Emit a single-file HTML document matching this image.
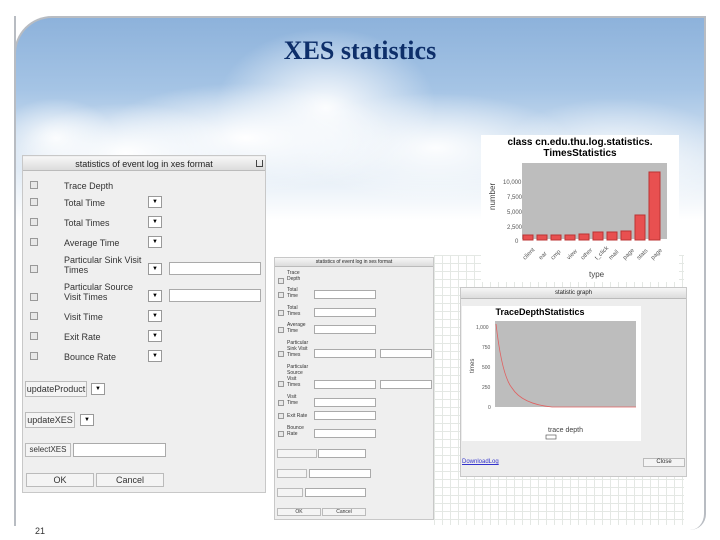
<!DOCTYPE html>
<html><head><meta charset="utf-8"><style>
*{margin:0;padding:0;box-sizing:border-box}
body{width:720px;height:540px;overflow:hidden;background:#fff;position:relative;font-family:"Liberation Sans",sans-serif}
.a{position:absolute}
.sky{left:14px;top:16px;width:692px;height:240px;border-top-left-radius:38px;border-top:2px solid #b8bcc2;border-left:2px solid #b8bcc2;
background:
radial-gradient(ellipse 110px 50px at 110px 135px,rgba(255,255,255,1),rgba(255,255,255,0)),
radial-gradient(ellipse 150px 55px at 230px 120px,rgba(255,255,255,1),rgba(255,255,255,0)),
radial-gradient(ellipse 110px 80px at 310px 90px,rgba(255,255,255,.95),rgba(255,255,255,0)),
radial-gradient(ellipse 140px 55px at 420px 130px,rgba(255,255,255,.95),rgba(255,255,255,0)),
radial-gradient(ellipse 120px 60px at 600px 140px,rgba(255,255,255,.85),rgba(255,255,255,0)),
radial-gradient(ellipse 60px 40px at 40px 120px,rgba(255,255,255,.9),rgba(255,255,255,0)),
linear-gradient(#8db2db 0%,#a5c4e5 30%,#dce8f4 60%,#fff 85%)}
.frameR{left:704px;top:16px;width:2px;height:360px;background:#b8bcc2}
.frameB{left:14px;top:16px;width:2px;height:510px;background:#b8bcc2}
.h1{left:0;top:36px;width:720px;text-align:center;font-family:"Liberation Serif",serif;font-weight:bold;font-size:26px;color:#0e2f6a}
.dlg{background:#efefef;border:1px solid #c8c8c8}
.hdr{background:linear-gradient(#f6f6f6,#dcdcdc);border-bottom:1px solid #bbb;text-align:center;font-size:9px;color:#222}
.cb{width:8px;height:8px;border:1px solid #999;background:#e8e8e8}
.t{font-size:9px;color:#333;line-height:10px}
.dd{width:14px;height:12px;border:1px solid #999;background:#fff;font-size:6px;text-align:center;line-height:10px}
.in{background:#fff;border:1px solid #aaa}
.btn{background:#f4f4f4;border:1px solid #bbb;font-size:9px;text-align:center;color:#333}
.grid{background-color:#fff;background-image:linear-gradient(#e4e8e4 1px,transparent 1px),linear-gradient(90deg,#e4e8e4 1px,transparent 1px);background-size:8px 8px}
</style></head><body>
<div class="a sky"></div>
<div class="a frameB"></div>
<div class="a frameR"></div>
<div class="a" style="left:690px;top:370px;width:16px;height:160px;border-right:2px solid #b8bcc2;border-bottom-right-radius:40px"></div>
<div class="a h1">XES statistics</div>

<div class="a grid" style="left:434px;top:255px;width:250px;height:270px"></div>

<!-- left dialog -->
<div class="a dlg" style="left:22px;top:155px;width:244px;height:338px"></div>
<div class="a hdr" style="left:23px;top:157px;width:242px;height:14px;line-height:14px">statistics of event log in xes format</div>
<div class="a" style="left:256px;top:160px;width:7px;height:7px;border:1px solid #444;border-top:none"></div>
<div class="a cb" style="left:30px;top:181px"></div><div class="a t" style="left:64px;top:181px">Trace Depth</div>
<div class="a cb" style="left:30px;top:198px"></div><div class="a t" style="left:64px;top:198px">Total Time</div><div class="a dd" style="left:148px;top:196px">▼</div>
<div class="a cb" style="left:30px;top:218px"></div><div class="a t" style="left:64px;top:218px">Total Times</div><div class="a dd" style="left:148px;top:216px">▼</div>
<div class="a cb" style="left:30px;top:238px"></div><div class="a t" style="left:64px;top:238px">Average Time</div><div class="a dd" style="left:148px;top:236px">▼</div>
<div class="a cb" style="left:30px;top:265px"></div><div class="a t" style="left:64px;top:255px">Particular Sink Visit<br>Times</div><div class="a dd" style="left:148px;top:263px">▼</div><div class="a in" style="left:169px;top:262px;width:92px;height:13px"></div>
<div class="a cb" style="left:30px;top:293px"></div><div class="a t" style="left:64px;top:282px">Particular Source<br>Visit Times</div><div class="a dd" style="left:148px;top:290px">▼</div><div class="a in" style="left:169px;top:289px;width:92px;height:13px"></div>
<div class="a cb" style="left:30px;top:312px"></div><div class="a t" style="left:64px;top:312px">Visit Time</div><div class="a dd" style="left:148px;top:310px">▼</div>
<div class="a cb" style="left:30px;top:332px"></div><div class="a t" style="left:64px;top:332px">Exit Rate</div><div class="a dd" style="left:148px;top:330px">▼</div>
<div class="a cb" style="left:30px;top:352px"></div><div class="a t" style="left:64px;top:352px">Bounce Rate</div><div class="a dd" style="left:148px;top:350px">▼</div>
<div class="a btn" style="left:25px;top:381px;width:62px;height:16px;line-height:14px">updateProduct</div><div class="a dd" style="left:91px;top:383px">▼</div>
<div class="a btn" style="left:25px;top:412px;width:50px;height:16px;line-height:14px">updateXES</div><div class="a dd" style="left:80px;top:414px">▼</div>
<div class="a btn" style="left:25px;top:443px;width:46px;height:14px;line-height:12px;font-size:8px">selectXES</div><div class="a in" style="left:73px;top:443px;width:93px;height:14px"></div>
<div class="a btn" style="left:26px;top:473px;width:68px;height:14px;line-height:12px">OK</div>
<div class="a btn" style="left:96px;top:473px;width:68px;height:14px;line-height:12px">Cancel</div>
<div class="a t" style="left:35px;top:526px;font-size:9px">21</div>

<!-- chart 1 -->
<div class="a" style="left:481px;top:135px;width:198px;height:147px;background:#fff"></div>
<div class="a" style="left:481px;top:137px;width:198px;text-align:center;font-size:10px;font-weight:bold;line-height:11px">class cn.edu.thu.log.statistics.<br>TimesStatistics</div>
<div class="a" style="left:522px;top:163px;width:145px;height:76px;background:#bdbdbd"></div>
<svg class="a" style="left:481px;top:160px" width="198" height="122">
<g fill="#e85050" stroke="#b33">
<rect x="42" y="75" width="10" height="5"/><rect x="56" y="75" width="10" height="5"/><rect x="70" y="75" width="10" height="5"/><rect x="84" y="75" width="10" height="5"/><rect x="98" y="74" width="10" height="6"/><rect x="112" y="72" width="10" height="8"/><rect x="126" y="72" width="10" height="8"/><rect x="140" y="71" width="10" height="9"/><rect x="154" y="55" width="10" height="25"/><rect x="168" y="12" width="11" height="68"/>
</g>
<g font-size="6" fill="#555"><text x="22" y="24">10,000</text><text x="26" y="39">7,500</text><text x="26" y="54">5,000</text><text x="26" y="69">2,500</text><text x="34" y="83">0</text></g>
<text x="14" y="50" font-size="8" fill="#444" transform="rotate(-90 14 50)">number</text>
<text x="108" y="117" font-size="8" fill="#444">type</text>
<g font-size="6" fill="#555"><text x="44" y="100" transform="rotate(-45 44 100)">client</text><text x="60" y="100" transform="rotate(-45 60 100)">ear</text><text x="72" y="100" transform="rotate(-45 72 100)">cmp</text><text x="88" y="100" transform="rotate(-45 88 100)">view</text><text x="102" y="100" transform="rotate(-45 102 100)">other</text><text x="116" y="100" transform="rotate(-45 116 100)">t_click</text><text x="130" y="100" transform="rotate(-45 130 100)">mail</text><text x="144" y="100" transform="rotate(-45 144 100)">page</text><text x="158" y="100" transform="rotate(-45 158 100)">stats</text><text x="172" y="100" transform="rotate(-45 172 100)">page</text></g>
</svg>

<!-- dialog 2 -->
<div class="a dlg" style="left:274px;top:257px;width:160px;height:263px"></div>
<div class="a hdr" style="left:275px;top:258px;width:158px;height:9px;line-height:9px;font-size:5px">statistics of event log in xes format</div>
<div style="font-size:5px;color:#333;line-height:6px">
<div class="a" style="left:287px;top:270px">Trace<br>Depth</div>
<div class="a" style="left:287px;top:287px">Total<br>Time</div>
<div class="a" style="left:287px;top:305px">Total<br>Times</div>
<div class="a" style="left:287px;top:322px">Average<br>Time</div>
<div class="a" style="left:287px;top:340px">Particular<br>Sink Visit<br>Times</div>
<div class="a" style="left:287px;top:364px">Particular<br>Source<br>Visit<br>Times</div>
<div class="a" style="left:287px;top:394px">Visit<br>Time</div>
<div class="a" style="left:287px;top:413px">Exit Rate</div>
<div class="a" style="left:287px;top:425px">Bounce<br>Rate</div>
</div>
<div class="a cb" style="left:278px;top:278px;width:6px;height:6px"></div>
<div class="a cb" style="left:278px;top:292px;width:6px;height:6px"></div>
<div class="a cb" style="left:278px;top:310px;width:6px;height:6px"></div>
<div class="a cb" style="left:278px;top:327px;width:6px;height:6px"></div>
<div class="a cb" style="left:278px;top:351px;width:6px;height:6px"></div>
<div class="a cb" style="left:278px;top:381px;width:6px;height:6px"></div>
<div class="a cb" style="left:278px;top:400px;width:6px;height:6px"></div>
<div class="a cb" style="left:278px;top:413px;width:6px;height:6px"></div>
<div class="a cb" style="left:278px;top:431px;width:6px;height:6px"></div>
<div class="a in" style="left:314px;top:290px;width:62px;height:9px"></div>
<div class="a in" style="left:314px;top:308px;width:62px;height:9px"></div>
<div class="a in" style="left:314px;top:325px;width:62px;height:9px"></div>
<div class="a in" style="left:314px;top:349px;width:62px;height:9px"></div><div class="a in" style="left:380px;top:349px;width:52px;height:9px"></div>
<div class="a in" style="left:314px;top:380px;width:62px;height:9px"></div><div class="a in" style="left:380px;top:380px;width:52px;height:9px"></div>
<div class="a in" style="left:314px;top:398px;width:62px;height:9px"></div>
<div class="a in" style="left:314px;top:411px;width:62px;height:9px"></div>
<div class="a in" style="left:314px;top:429px;width:62px;height:9px"></div>
<div class="a btn" style="left:277px;top:449px;width:40px;height:9px"></div><div class="a in" style="left:318px;top:449px;width:48px;height:9px"></div>
<div class="a btn" style="left:277px;top:469px;width:30px;height:9px"></div><div class="a in" style="left:309px;top:469px;width:62px;height:9px"></div>
<div class="a btn" style="left:277px;top:488px;width:26px;height:9px"></div><div class="a in" style="left:305px;top:488px;width:61px;height:9px"></div>
<div class="a btn" style="left:277px;top:508px;width:44px;height:8px;font-size:5px;line-height:6px">OK</div>
<div class="a btn" style="left:322px;top:508px;width:44px;height:8px;font-size:5px;line-height:6px">Cancel</div>

<!-- graph dialog -->
<div class="a dlg" style="left:460px;top:287px;width:227px;height:190px;background:#ededed"></div>
<div class="a hdr" style="left:461px;top:288px;width:225px;height:11px;line-height:11px;font-size:6px">statistic graph</div>
<div class="a" style="left:462px;top:306px;width:179px;height:135px;background:#fff"></div>
<div class="a" style="left:462px;top:307px;width:180px;text-align:center;font-size:9px;font-weight:bold;margin-left:-12px">TraceDepthStatistics</div>
<div class="a" style="left:495px;top:321px;width:141px;height:86px;background:#bdbdbd"></div>
<svg class="a" style="left:462px;top:306px" width="180" height="135">
<path d="M34 18 Q40 70 50 82 Q60 98 90 101 L174 101" fill="none" stroke="#e06060" stroke-width="0.8"/>
<g font-size="5" fill="#555"><text x="14" y="23">1,000</text><text x="20" y="43">750</text><text x="20" y="63">500</text><text x="20" y="83">250</text><text x="26" y="103">0</text></g>
<text x="12" y="67" font-size="6" fill="#444" transform="rotate(-90 12 67)">times</text>
<text x="86" y="126" font-size="7" fill="#444">trace depth</text>
<rect x="84" y="129" width="10" height="4" fill="none" stroke="#444" stroke-width=".6"/>
</svg>
<div class="a" style="left:462px;top:459px;font-size:6px;color:#33c;text-decoration:underline">DownloadLog</div>
<div class="a btn" style="left:643px;top:458px;width:42px;height:9px;font-size:6px;line-height:7px">Close</div>
</body></html>
